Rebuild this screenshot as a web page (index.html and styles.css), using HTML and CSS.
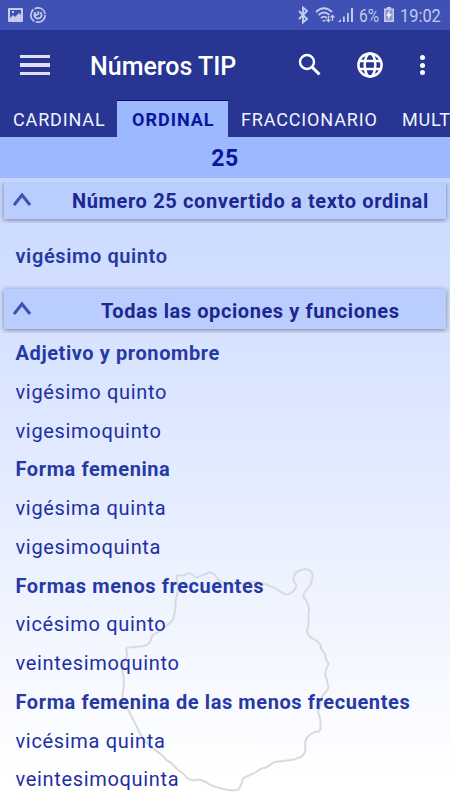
FILE: index.html
```html
<!DOCTYPE html>
<html lang="es">
<head>
  <meta charset="UTF-8">
  <meta name="viewport" content="width=device-width, initial-scale=1.0">
  <title>Números TIP</title>
  <link rel="stylesheet" href="styles.css">
</head>
<body>
  <div class="status">
    <svg class="status-left" width="48" height="30" viewBox="0 0 48 30">
      <path fill-rule="evenodd" d="M9 8h13a1 1 0 0 1 1 1v12a1 1 0 0 1-1 1H9a1 1 0 0 1-1-1V9a1 1 0 0 1 1-1zM10 10v8l3-3 2 2 4-4 2 2v-5zM12 11h2v2h-2z"/>
      <g fill="none" stroke="#c5cbea" stroke-width="1.7">
        <circle cx="38" cy="15" r="7.200" stroke-dasharray="13.600 1.500"/>
        <path d="M35.700 12.200a3.600 3.600 0 1 0 4.600 0M35.300 15.500l3-1.500v-2.500" stroke-width="1.900"/>
      </g>
    </svg>
    <svg class="status-icons" width="60" height="30" viewBox="295 0 60 30">
      <path d="M299 11l8 8-4 3.500v-15l4 3.500-8 8" fill="none" stroke="#c5cbea" stroke-width="1.900"/>
      <g fill="none" stroke="#c5cbea" stroke-width="1.800">
        <path d="M316 12q8-7.500 16 0M318.500 15q5.500-5 11 0M321 18q3-2.800 6 0"/>
        <path d="M328.500 16v5.500M326.500 19.500l2 2 2-2M332.500 21v-5.500M330.500 17.500l2-2 2 2" stroke-width="1.300"/>
      </g>
      <path d="M322 20h4l-2 2zM338 22l3-3v3zM343 16.500h1.800V22H343zM347 13h1.800v9H347zM351 8h2v14h-2z"/>
    </svg>
    <span class="battery-text">6%</span>
    <svg class="battery" width="10" height="30" viewBox="0 0 10 30">
      <path d="M3 7h4v1.500h3V22H0V8.500h3z"/>
      <path d="M1.500 10h7v10.500h-7z" fill="#8994d0"/>
      <path d="M6 10l-4 5.800h2.300L3.500 20 8 14H5.500z" fill="#eceefa"/>
    </svg>
    <span class="clock">19:02</span>
  </div>

  <header class="appbar">
    <div class="menu"><i></i><i></i><i></i></div>
    <h1>Números TIP</h1>
    <svg class="search" width="24" height="24" viewBox="0 0 24 24">
      <circle cx="9" cy="9" r="7" fill="none" stroke="#fff" stroke-width="2.400"/>
      <path d="M14 14l7.500 7.500" stroke="#fff" stroke-width="3"/>
    </svg>
    <svg class="globe" width="26" height="26" viewBox="0 0 26 26" fill="none" stroke="#fff" stroke-width="2.500">
      <circle cx="13" cy="13" r="11.600"/>
      <ellipse cx="13" cy="13" rx="5.300" ry="11.600"/>
      <path d="M2.500 9h21M2.500 17h21"/>
    </svg>
    <div class="dots"><i></i><i></i><i></i></div>
  </header>

  <nav class="tabs">
    <span class="tab cardinal">CARDINAL</span>
    <span class="tab active">ORDINAL</span>
    <span class="tab fraccionario">FRACCIONARIO</span>
    <span class="tab mult">MULT</span>
  </nav>

  <div class="number">25</div>

  <main class="content">
    <svg class="island" width="230" height="240" viewBox="0 0 690 720">
      <path d="M48 268C53 258 67 264 75 261C86 257 93 263 105 257C122 252 124 238 126 228C134 218 154 216 165 202L173 193C189 185 192 177 191 165C198 160 194 141 197 130C195 118 203 104 205 85L200 48C205 43 213 48 224 46C229 38 240 37 250 45C253 54 259 54 269 49L300 37C312 37 319 49 325 60C338 64 348 76 361 75C380 70 398 75 412 67C435 60 452 70 467 73L489 82C501 84 508 96 520 100C533 108 547 97 553 90C563 76 558 71 550 61C550 45 557 33 575 29C590 26 609 30 608 49C605 67 602 80 588 91C578 107 577 110 588 119C591 132 600 143 597 154C592 160 598 169 596 178C593 187 598 194 593 203C588 212 593 226 602 232C614 240 627 244 633 257C629 266 640 275 646 283C643 295 652 303 656 312C647 324 648 335 645 345C654 356 648 368 656 381C653 395 637 402 635 416C632 430 630 441 624 456C629 468 634 479 631 498C634 514 624 517 614 515C604 525 592 525 588 538C582 549 589 563 584 577C580 594 562 594 550 599L495 606C480 611 478 621 464 624C449 622 445 635 431 640L400 654C394 666 394 681 384 689C373 694 355 689 342 688L318 681C303 679 294 669 281 663L264 658C250 666 240 659 231 654C224 641 215 638 204 630L181 606C168 607 166 591 153 583L125 562C101 540 90 526 80 499L56 453C42 434 36 426 38 400C43 380 44 365 39 342C34 330 40 315 48 295C54 284 50 275 48 268z"/>
    </svg>
    <section class="panel first">
      <svg width="20" height="16" viewBox="0 0 20 16"><path d="M2 14l8-10 8 10"/></svg>
      <h2 class="title-one">Número 25 convertido a texto ordinal</h2>
    </section>
    <p class="result">vigésimo quinto</p>
    <section class="panel second">
      <svg width="20" height="16" viewBox="0 0 20 16"><path d="M2 14l8-10 8 10"/></svg>
      <h2 class="title-two">Todas las opciones y funciones</h2>
    </section>
    <div class="list">
      <h3>Adjetivo y pronombre</h3>
      <p>vigésimo quinto</p>
      <p>vigesimoquinto</p>
      <h3>Forma femenina</h3>
      <p>vigésima quinta</p>
      <p>vigesimoquinta</p>
      <h3>Formas menos frecuentes</h3>
      <p>vicésimo quinto</p>
      <p>veintesimoquinto</p>
      <h3>Forma femenina de las menos frecuentes</h3>
      <p>vicésima quinta</p>
      <p>veintesimoquinta</p>
    </div>
  </main>
</body>
</html>
```
FILE: styles.css
```css
* {
  box-sizing: border-box;
}

body {
  margin: 0;
  width: 450px;
  height: 800px;
  overflow: hidden;
  font-family: Roboto, sans-serif;
  color: #2639a5;
  display: flex;
  flex-direction: column;
}

h1, h2, h3, p {
  margin: 0;
}

.status {
  height: 30px;
  flex: none;
  background: #3f51b5;
  color: #c5cbea;
  fill: #c5cbea;
  display: flex;
  line-height: 31px;
  font-size: 18px;
}

.status-icons {
  margin-left: 247px;
}

.battery-text {
  width: 24px;
  margin-left: 4px;
  transform: scaleX(0.86);
  transform-origin: left;
}

.battery {
  margin-left: 1px;
}

.clock {
  margin-left: 6px;
  transform: scaleX(0.91);
  transform-origin: left;
}

.appbar {
  height: 70px;
  flex: none;
  background: #283593;
  display: flex;
  align-items: center;
  padding-left: 20px;
}

.menu {
  width: 30px;
  display: grid;
  gap: 5px;
}

.menu i {
  height: 3.500px;
  background: #dfe1f2;
}

h1 {
  width: 158px;
  margin-left: 40px;
  margin-top: 3px;
  color: #fff;
  font-size: 25px;
  font-weight: 500;
  white-space: nowrap;
}

.search {
  margin-left: 50px;
}

.globe {
  margin-left: 35px;
}

.dots {
  display: grid;
  gap: 2.500px;
  margin-left: 37px;
}

.dots i {
  width: 5px;
  height: 5px;
  border-radius: 50%;
  background: #fff;
}

.tabs {
  height: 37px;
  flex: none;
  background: #283593;
  display: flex;
  overflow: hidden;
}

.tab {
  flex: none;
  color: #f1f3ff;
  font-size: 18px;
  line-height: 39px;
  letter-spacing: 0.850px;
  white-space: nowrap;
}

.cardinal {
  width: 117px;
  padding-left: 13px;
}

.active {
  width: 111px;
  padding-left: 15px;
  background: #9cb8ff;
  color: #0b159c;
  font-weight: 700;
  letter-spacing: 1px;
  border-top: 1px solid #080879;
  line-height: 37px;
}

.fraccionario {
  width: 174px;
  padding-left: 13px;
}

.number {
  height: 41px;
  flex: none;
  background: #9cb8ff;
  color: #0b159c;
  font-size: 23px;
  font-weight: 700;
  letter-spacing: 0.600px;
  line-height: 44px;
  text-align: center;
}

.content {
  position: relative;
  height: 622px;
  background: linear-gradient(#c8d8ff, #fff 96%);
}

.island {
  position: absolute;
  left: 110px;
  top: 382px;
  fill: none;
  stroke: #d9dadd;
  stroke-width: 6;
}

.panel {
  position: relative;
  height: 45px;
  padding: 4px 4px 0;
  overflow: hidden;
}

.panel svg {
  position: absolute;
  left: 12px;
  top: 13px;
  fill: none;
  stroke: #3f51b5;
  stroke-width: 3;
}

.panel h2 {
  height: 37px;
  background: #bacdff;
  box-shadow: 0 1px 5px rgba(80, 80, 100, 0.7);
  color: #1c2790;
  font-size: 20px;
  font-weight: 700;
  line-height: 38px;
  white-space: nowrap;
}

/* the strip under the number bar hides the top shadow */
.first::before {
  content: "";
  position: absolute;
  left: 0;
  top: 0;
  width: 450px;
  height: 4px;
  background: #c5d6ff;
}

.panel .title-one {
  padding-left: 68px;
  letter-spacing: 0.630px;
}

.panel .title-two {
  height: 40px;
  line-height: 44px;
  padding-left: 97px;
  letter-spacing: 0.580px;
}

.second {
  height: 48px;
}

.second svg {
  top: 15px;
}

.result {
  height: 62px;
  padding-left: 15.500px;
  font-size: 20px;
  font-weight: 600;
  letter-spacing: 0.600px;
  line-height: 66px;
}

.list {
  position: relative;
  padding: 1px 0 0 15.500px;
  line-height: 38.770px;
  white-space: nowrap;
}

.list p {
  font-size: 20px;
  letter-spacing: 0.670px;
  color: #1e2fa4;
}

.list h3 {
  font-size: 20px;
  font-weight: 700;
  letter-spacing: 0.590px;
}
```
